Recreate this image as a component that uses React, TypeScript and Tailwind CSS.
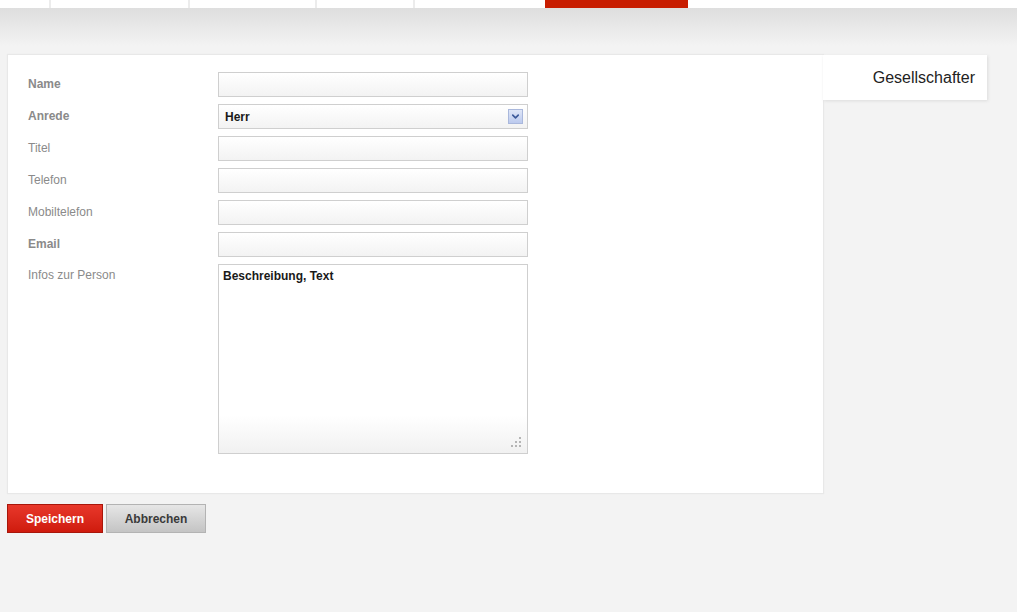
import { ChevronDown } from "lucide-react";

const FELDER = [
  { label: "Name", bold: true },
  { label: "Anrede", bold: true, select: true },
  { label: "Titel" },
  { label: "Telefon" },
  { label: "Mobiltelefon" },
  { label: "Email", bold: true },
];

const NAV = [
  { w: "w-[51px]" },
  { w: "w-[139px]" },
  { w: "w-[127px]" },
  { w: "w-[98px]" },
  { w: "w-[130px]", ohne: true },
  { w: "w-[143px]", aktiv: true },
];

function Eingabe() {
  return <div className="h-[25px] w-[310px] border border-[#cfcfcf] bg-gradient-to-b from-white to-[#f3f3f3]" />;
}

function Auswahl() {
  return (
    <div className="flex h-[25px] w-[310px] items-center justify-between border border-[#cfcfcf] bg-gradient-to-b from-white to-[#f3f3f3] pl-[6px] pr-[4px]">
      <span className="text-[12px] font-bold text-[#1a1a1a]">Herr</span>
      <span className="grid h-[15px] w-[15px] place-items-center border border-[#aab8dc] bg-gradient-to-b from-[#dfe6f7] to-[#bccaee]">
        <ChevronDown className="h-[11px] w-[11px] text-[#3d5a9a]" strokeWidth={3.5} />
      </span>
    </div>
  );
}

export default function App() {
  return (
    <div className="min-h-[612px] bg-[#f3f3f3] font-['Liberation_Sans',Arial,sans-serif]">
      {/* Navigation oben */}
      <div className="flex h-[8px] bg-white">
        {NAV.map((n, i) => (
          <div
            key={i}
            className={`${n.w} h-full ${n.aktiv ? "bg-[#c81d00]" : n.ohne ? "" : "border-r-2 border-[#ececec]"}`}
          />
        ))}
      </div>
      <div className="h-[38px] bg-gradient-to-b from-[#dedede] to-[#f3f3f3]" />

      <div className="flex items-start pl-[8px] pt-[9px]">
        <div className="w-[815px] bg-white pb-[39px] pl-[20px] pt-[17px] shadow-[0_0_1px_1px_#e8e8e8]">
          <div className="flex flex-col gap-[7px]">
            {FELDER.map((f) => (
              <div key={f.label} className="flex items-center">
                <span className={`-mt-[2px] w-[190px] text-[12px] text-[#8a8a8a] ${f.bold ? "font-bold" : ""}`}>{f.label}</span>
                {f.select ? <Auswahl /> : <Eingabe />}
              </div>
            ))}
            <div className="flex items-start">
              <span className="w-[190px] pt-[2px] text-[12px] text-[#8a8a8a]">Infos zur Person</span>
              <div className="relative h-[190px] w-[310px] border border-[#cfcfcf] bg-gradient-to-b from-white from-80% to-[#f1f1f1] px-[4px] pt-[2px] text-[12px]">
                <span className="font-bold text-[#1a1a1a]">Beschreibung, Text</span>
                <svg className="absolute bottom-[6px] right-[6px]" width="10" height="10" viewBox="0 0 10 10">
                  <rect x="8" y="0" width="2" height="2" fill="#b5b5b5" />
                  <rect x="4" y="4" width="2" height="2" fill="#b5b5b5" />
                  <rect x="8" y="4" width="2" height="2" fill="#b5b5b5" />
                  <rect x="0" y="8" width="2" height="2" fill="#b5b5b5" />
                  <rect x="4" y="8" width="2" height="2" fill="#b5b5b5" />
                  <rect x="8" y="8" width="2" height="2" fill="#b5b5b5" />
                </svg>
              </div>
            </div>
          </div>
        </div>
        <div className="flex h-[45px] w-[164px] items-center justify-end bg-white pr-[12px] shadow-[1px_1px_3px_#dcdcdc]">
          <span className="text-[16px] text-[#222]">Gesellschafter</span>
        </div>
      </div>

      <div className="flex gap-[3px] pl-[7px] pt-[11px]">
        <button className="h-[29px] w-[96px] border border-[#a8160a] bg-gradient-to-b from-[#e8372a] to-[#cf1a0c] text-[12px] font-bold text-white">
          Speichern
        </button>
        <button className="h-[29px] w-[100px] border border-[#b3b3b3] bg-gradient-to-b from-[#e6e6e6] to-[#c4c4c4] text-[12px] font-bold text-[#3a3a3a]">
          Abbrechen
        </button>
      </div>
    </div>
  );
}
